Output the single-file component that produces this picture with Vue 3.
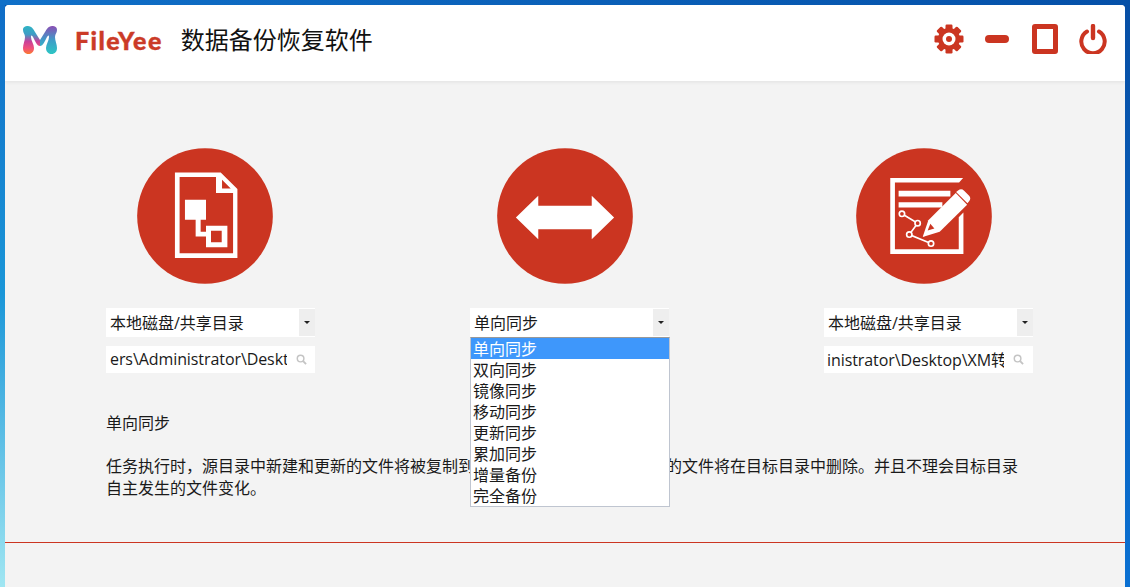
<script setup>
const items = ['单向同步', '双向同步', '镜像同步', '移动同步', '更新同步', '累加同步', '增量备份', '完全备份']
const teeth = [0, 45, 90, 135, 180, 225, 270, 315]
</script>

<template>
  <div class="desktop">
    <div class="window">
      <header class="header">
        <svg class="logo" viewBox="0 0 36 28" width="36" height="28">
          <defs>
            <linearGradient id="lg1" x1="0" y1="0" x2="0" y2="1">
              <stop offset="0" stop-color="#2fb4c4" />
              <stop offset="0.3" stop-color="#3f9cc6" />
              <stop offset="0.55" stop-color="#c8409a" />
              <stop offset="0.8" stop-color="#f2507a" />
              <stop offset="1" stop-color="#f97c2e" />
            </linearGradient>
            <linearGradient id="lg2" x1="0" y1="0" x2="0" y2="1">
              <stop offset="0" stop-color="#8a4fb4" />
              <stop offset="0.5" stop-color="#3f9cc8" />
              <stop offset="1" stop-color="#2cc6c4" />
            </linearGradient>
          </defs>
          <path d="M1 4C1 1 3 0 6 0C9 0 11 2 13 6L18 14V20C15 20 13 15 11 11C10 9 9 9 9 11C9 15 12 18 12 22C12 26 9 28 6.500 28C3 28 1 25.500 1 22C1 18 3 15 3 11C3 8 1 7 1 4Z" fill="url(#lg1)" />
          <path d="M35 4C35 1 33 0 30 0C27 0 25 2 23 6L18 14V20C21 20 23 15 25 11C26 9 27 9 27 11C27 15 24 18 24 22C24 26 27 28 29.500 28C33 28 35 25.500 35 22C35 18 33 15 33 11C33 8 35 7 35 4Z" fill="url(#lg2)" />
        </svg>
        <span class="brand">FileYee</span>
        <h1 class="title">数据备份恢复软件</h1>
        <div class="controls">
          <svg class="gear" viewBox="0 0 30 30" width="30" height="30">
            <g fill="#cb3521">
              <rect v-for="t in teeth" :key="t" x="11.500" y="0.500" width="7" height="7" rx="1.200" :transform="`rotate(${t} 15 15)`" />
              <circle cx="15" cy="15" r="11" />
            </g>
            <circle cx="15" cy="15" r="6.500" fill="#fff" />
            <circle cx="15" cy="15" r="3" fill="#cb3521" />
          </svg>
          <span class="minimize"></span>
          <span class="maximize"></span>
          <svg class="power" viewBox="0 0 28 30" width="28" height="30">
            <path d="M8 7.500A11.700 11.700 0 1 0 20 7.500" fill="none" stroke="#cb3521" stroke-width="4" stroke-linecap="round" />
            <path d="M14 2V14" fill="none" stroke="#cb3521" stroke-width="4.400" stroke-linecap="round" />
          </svg>
        </div>
      </header>

      <main class="main">
        <section class="panels">
          <div class="panel">
            <div class="disc disc-left">
              <svg viewBox="22 25 406 407" width="136" height="136">
                <circle cx="225" cy="228.500" r="203" fill="#cb3521" />
                <path fill="#fff" fill-rule="evenodd" d="M135 98H272L322 148V354H135ZM149 112V340H309V160H258V112ZM276 120V146H302Z" />
                <path fill="#fff" d="M165 180H228V240H212V276H232V290H197V240H165Z" />
                <path fill="#fff" fill-rule="evenodd" d="M228 258H292V322H228ZM243 273V307H275V273Z" />
              </svg>
            </div>
            <div class="select">
              <span class="select-text">本地磁盘/共享目录</span>
              <span class="select-btn"></span>
            </div>
            <div class="path">
              <span class="path-text">ers\Administrator\Desktop</span>
              <svg class="search" viewBox="0 0 12 12" width="11" height="11">
                <circle cx="5" cy="5" r="3.600" fill="none" stroke="#c4c4c4" stroke-width="1.600" />
                <path d="M7.800 7.800L11 11" stroke="#c4c4c4" stroke-width="2" />
              </svg>
            </div>
          </div>

          <div class="panel panel-mid">
            <div class="disc disc-mid">
              <svg viewBox="22 25 406 407" width="136" height="136">
                <circle cx="225" cy="228.500" r="203" fill="#cb3521" />
                <path fill="#fff" d="M78 233L145 168V198H305V168L372 233L305 298V268H145V298Z" />
              </svg>
            </div>
            <div class="select">
              <span class="select-text">单向同步</span>
              <span class="select-btn"></span>
            </div>
            <ul class="dropdown">
              <li v-for="(item, i) in items" :key="item" class="option" :class="{ active: i === 0 }">{{ item }}</li>
            </ul>
          </div>

          <div class="panel">
            <div class="disc disc-right">
              <svg viewBox="18 25 406 407" width="136" height="136">
                <circle cx="221" cy="228.500" r="203" fill="#cb3521" />
                <path fill="#fff" d="M120 115H338L326 128H134V328H325V232L339 218V342H120Z" />
                <path fill="#fff" d="M145 153H300V170H145ZM145 187H276V203H145Z" />
                <path fill="#fff" d="M217 291L234 241L316 160L350 195L268 276Z" />
                <path fill="#cb3521" d="M232 272L240 252L252 266Z" />
                <path fill="#fff" d="M323 152Q333 145 341 153L356 168Q363 176 356 184L351 190L317 157Z" />
                <path d="M155 222L202 250L177 284L242 311" fill="none" stroke="#fff" stroke-width="5" />
                <g fill="#cb3521" stroke="#fff" stroke-width="5">
                  <circle cx="155" cy="222" r="8" />
                  <circle cx="202" cy="250" r="8" />
                  <circle cx="177" cy="284" r="8" />
                  <circle cx="242" cy="311" r="8" />
                </g>
              </svg>
            </div>
            <div class="select">
              <span class="select-text">本地磁盘/共享目录</span>
              <span class="select-btn"></span>
            </div>
            <div class="path path-right">
              <span class="path-text">inistrator\Desktop\XM转换</span>
              <svg class="search" viewBox="0 0 12 12" width="11" height="11">
                <circle cx="5" cy="5" r="3.600" fill="none" stroke="#c4c4c4" stroke-width="1.600" />
                <path d="M7.800 7.800L11 11" stroke="#c4c4c4" stroke-width="2" />
              </svg>
            </div>
          </div>
        </section>

        <section class="desc">
          <p class="desc-title">单向同步</p>
          <p class="desc-body">任务执行时，源目录中新建和更新的文件将被复制到目标目录，源目录中被删除的文件将在目标目录中删除。并且不理会目标目录自主发生的文件变化。</p>
        </section>

        <div class="rule"></div>
      </main>
    </div>
  </div>
</template>

<style>
html, body { margin: 0; padding: 0; }
</style>

<style scoped>
.desktop {
  width: 1130px;
  height: 587px;
  box-sizing: border-box;
  padding: 5px 5px 0;
  overflow: hidden;
  background:
    linear-gradient(90deg, #1070c8, #0550a8) top left / 100% 5px no-repeat,
    linear-gradient(180deg, #0f6cc6 0%, #1a96d8 50%, #a0e6f2 100%) top left / 5px 100% no-repeat,
    linear-gradient(180deg, #074ea4 0%, #0a70d2 100%);
  font-family: "Open Sans", "Noto Sans CJK SC", sans-serif;
  color: #1a1a1a;
}
.window {
  height: 582px;
  display: flex;
  flex-direction: column;
  background: #f3f3f3;
  border-radius: 4px 4px 0 0;
  overflow: hidden;
}
.header {
  flex: none;
  height: 76px;
  box-sizing: border-box;
  display: flex;
  align-items: center;
  padding: 0 17px 6px;
  background: #fff;
  box-shadow: 0 1px 4px rgba(0, 0, 0, 0.08);
}
.logo { flex: none; }
.brand {
  margin: 0 0 1px 17px;
  font-family: "Lato", sans-serif;
  font-weight: 900;
  font-size: 25px;
  letter-spacing: 1.4px;
  color: #cb3b28;
  -webkit-text-stroke: 0.4px #cb3b28;
}
.title {
  margin: 0 0 4px 18px;
  font-family: "Noto Sans CJK SC", sans-serif;
  font-weight: 400;
  font-size: 24px;
  color: #111;
}
.controls {
  margin-left: auto;
  display: flex;
  align-items: center;
  padding: 0 1px 2px 0;
}
.gear { flex: none; }
.minimize {
  width: 24px;
  height: 8px;
  margin-left: 21px;
  border-radius: 4px;
  background: #cb3521;
}
.maximize {
  width: 26px;
  height: 30px;
  box-sizing: border-box;
  margin-left: 23px;
  border: 5px solid #cb3521;
  border-radius: 3px;
}
.power { flex: none; margin-left: 21px; }

.main {
  flex: 1;
  display: flex;
  flex-direction: column;
  box-sizing: border-box;
  padding-top: 67px;
}
.panels {
  display: flex;
  justify-content: space-between;
  padding: 0 92px 0 101px;
}
.panel {
  position: relative;
  width: 209px;
}
.panel-mid { width: 199px; }
.disc { height: 136px; margin-bottom: 24px; }
.disc svg { display: block; }
.disc-left { margin-left: 31px; }
.disc-mid { margin-left: 27px; }
.disc-right { margin-left: 32px; }
.select {
  height: 29px;
  box-sizing: border-box;
  display: flex;
  align-items: center;
  justify-content: space-between;
  background: #fff;
  font-size: 16px;
  color: #1a1a1a;
}
.select-text { padding: 0 0 2px 4px; }
.select-btn {
  position: relative;
  align-self: stretch;
  width: 16px;
  margin: 1px 0;
  background: #eee;
}
.select-btn::after {
  content: "";
  position: absolute;
  left: 5px;
  top: 12px;
  border: 3px solid transparent;
  border-top: 3px solid #222;
  border-bottom: 0;
}
.path {
  height: 27px;
  box-sizing: border-box;
  margin-top: 9px;
  display: flex;
  align-items: center;
  background: #fff;
  font-size: 16px;
}
.path-text {
  flex: none;
  width: 177px;
  margin-left: 4px;
  padding-bottom: 2px;
  overflow: hidden;
  white-space: nowrap;
  letter-spacing: -0.08px;
  color: #1a1a1a;
}
.path-right .path-text { margin-left: 3px; }
.search { flex: none; margin-left: 9px; }
.dropdown {
  position: absolute;
  left: 0;
  top: 189px;
  z-index: 2;
  width: 200px;
  height: 170px;
  box-sizing: border-box;
  margin: 0;
  padding: 0;
  list-style: none;
  background: #fff;
  border: 1px solid #bfc5d0;
  border-top-color: #999;
}
.option {
  height: 21px;
  line-height: 23px;
  padding-left: 2px;
  font-size: 16px;
  color: #1a1a1a;
}
.option.active {
  background: #3e97fb;
  color: #fff;
}
.desc {
  margin: 0;
  padding: 39px 101px 0;
  font-size: 16px;
  color: #1a1a1a;
}
.desc p { margin: 0; }
.desc-title { line-height: 23px; margin-bottom: 20px !important; }
.desc-body { line-height: 22px; }
.rule {
  margin-top: auto;
  margin-bottom: 44px;
  height: 1px;
  background: #cb3521;
}
</style>
